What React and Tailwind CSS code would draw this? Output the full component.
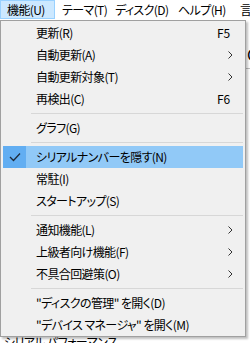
import React from 'react';

const font = { fontFamily: '"Yu Gothic UI", "Noto Sans CJK JP", "Noto Sans", sans-serif' };

const items = [
  { label: '更新(R)', key: 'F5' },
  { label: '自動更新(A)', sub: true },
  { label: '自動更新対象(T)', sub: true },
  { label: '再検出(C)', key: 'F6' },
  { sep: true },
  { label: 'グラフ(G)' },
  { sep: true },
  { label: 'シリアルナンバーを隠す(N)', checked: true, hover: true },
  { label: '常駐(I)' },
  { label: 'スタートアップ(S)' },
  { sep: true },
  { label: '通知機能(L)', sub: true },
  { label: '上級者向け機能(F)', sub: true },
  { label: '不具合回避策(O)', sub: true },
  { sep: true },
  { label: '"ディスクの管理" を開く(D)' },
  { label: '"デバイス マネージャ" を開く(M)' },
];

function Chevron() {
  return (
    <svg width="5" height="8" viewBox="0 0 5 8" className="text-[#333]">
      <path d="M0.5 0.5 L4 4 L0.5 7.5" fill="none" stroke="currentColor" strokeWidth="1" />
    </svg>
  );
}

function Check() {
  return (
    <svg width="12" height="10" viewBox="0 0 12 10">
      <path d="M1 5 L4.5 8.5 L11 1.5" fill="none" stroke="#1e2a3a" strokeWidth="1.3" />
    </svg>
  );
}

function MenuItem({ item }) {
  if (item.sep) {
    return (
      <div className="h-[7px] flex items-center pl-[30px] pr-[2px]">
        <div className="h-px w-full bg-[#d7d7d7]" />
      </div>
    );
  }
  return (
    <div className={`h-[22px] flex items-center mx-[2px] ${item.hover ? 'bg-[#91c9f7]' : ''}`}>
      <div className={`w-[23px] h-full flex items-center justify-center ${item.hover ? 'bg-[#62aef2]' : ''}`}>
        {item.checked && <Check />}
      </div>
      <span className="ml-[10px] flex-1 whitespace-nowrap">{item.label}</span>
      {item.key && <span className="w-[26px] tracking-normal">{item.key}</span>}
      {item.sub && (
        <span className="w-[15px] flex items-center">
          <Chevron />
        </span>
      )}
    </div>
  );
}

export default function App() {
  return (
    <div
      className="relative w-[250px] h-[343px] overflow-hidden bg-white text-[12px] leading-[16px] tracking-[-0.6px] text-black [font-feature-settings:'palt']"
      style={font}
    >
      <div className="h-[20px] flex items-start bg-white whitespace-nowrap">
        <div className="shrink-0 w-[55px] h-[19px] border border-[#99d1ff] bg-[#cce8ff] flex items-center pl-[6px]">機能(U)</div>
        <div className="shrink-0 w-[60px] h-[19px] flex items-center pl-[7px]">テーマ(T)</div>
        <div className="shrink-0 w-[63px] h-[19px] flex items-center">ディスク(D)</div>
        <div className="shrink-0 w-[62px] h-[19px] flex items-center">ヘルプ(H)</div>
        <div className="shrink-0 h-[19px] flex items-center">言語</div>
      </div>

      <div className="pl-[247px] pt-[26px] text-[16px] leading-none">C</div>
      <div className="mt-[6px] h-px bg-[#bfbfbf]" />
      <div className="absolute left-0 top-[334px] pl-[4px] whitespace-nowrap">シリアル パフォーマンス</div>

      <div className="absolute left-0 top-[20px] w-[246px] bg-[#f0f0f0] border border-[#a0a0a0] pt-px shadow-[2px_2px_2px_rgba(0,0,0,0.25)]">
        {items.map((item, i) => (
          <MenuItem key={i} item={item} />
        ))}
      </div>
    </div>
  );
}
